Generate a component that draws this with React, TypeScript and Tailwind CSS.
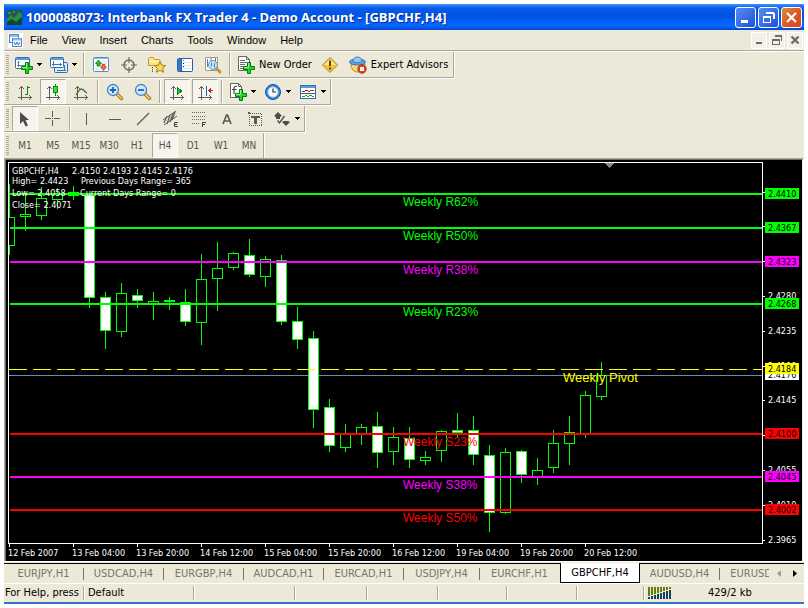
import type { ReactNode } from 'react';
import clsx from 'clsx';

type Candle = {
  high: number;
  low: number;
  top: number;
  bottom: number;
  kind: 'up' | 'down' | 'doji';
};

const c = (
  high: number,
  low: number,
  top: number,
  bottom: number,
  kind: Candle['kind'] = 'up'
): Candle => ({ high, low, top, bottom, kind });

const CANDLES: Candle[] = [
  c(24, 95, 57, 86),
  c(34, 71, 54, 57),
  c(27, 60, 38, 56),
  c(28, 49, 34, 40),
  c(26, 40, 32, 36, 'doji'),
  c(34, 148, 35, 138, 'down'),
  c(132, 189, 137, 171, 'down'),
  c(123, 177, 133, 172),
  c(129, 148, 135, 141, 'down'),
  c(132, 160, 141, 144),
  c(137, 150, 140, 142, 'doji'),
  c(129, 166, 142, 162, 'down'),
  c(94, 185, 119, 163),
  c(82, 151, 108, 119),
  c(92, 110, 93, 108),
  c(79, 117, 95, 115, 'down'),
  c(96, 127, 99, 117),
  c(95, 165, 100, 162, 'down'),
  c(147, 189, 161, 180, 'down'),
  c(171, 268, 178, 250, 'down'),
  c(239, 292, 247, 286, 'down'),
  c(264, 292, 274, 288),
  c(264, 285, 267, 275),
  c(252, 308, 266, 293, 'down'),
  c(267, 305, 277, 292),
  c(267, 308, 278, 300, 'down'),
  c(291, 305, 297, 301),
  c(270, 302, 271, 291),
  c(253, 277, 270, 273, 'down'),
  c(256, 305, 270, 295, 'down'),
  c(285, 372, 295, 353, 'down'),
  c(288, 354, 292, 353),
  c(290, 323, 291, 315, 'down'),
  c(298, 325, 310, 317),
  c(270, 313, 283, 308),
  c(256, 305, 272, 284),
  c(231, 278, 235, 274),
  c(202, 240, 215, 237),
];

const LEVELS = [
  { label: 'Weekly R62%', price: '2.4410', y: 34, color: '#00ff00' },
  { label: 'Weekly R50%', price: '2.4367', y: 68, color: '#00ff00' },
  { label: 'Weekly R38%', price: '2.4323', y: 102, color: '#ff00ff' },
  { label: 'Weekly R23%', price: '2.4268', y: 144, color: '#00ff00' },
  { label: 'Weekly S23%', price: '2.4100', y: 274, color: '#ff0000' },
  { label: 'Weekly S38%', price: '2.4045', y: 317, color: '#ff00ff' },
  { label: 'Weekly S50%', price: '2.4002', y: 350, color: '#ff0000' },
];

const PRICE_TICKS = [
  { y: 32 },
  { y: 66 },
  { y: 101 },
  { y: 136, price: '2.4280' },
  { y: 171, price: '2.4235' },
  { y: 206, price: '2.4190' },
  { y: 240, price: '2.4145' },
  { y: 275 },
  { y: 310, price: '2.4055' },
  { y: 345, price: '2.4010' },
  { y: 380, price: '2.3965' },
];

const TIMES = [
  '12 Feb 2007',
  '13 Feb 04:00',
  '13 Feb 20:00',
  '14 Feb 12:00',
  '15 Feb 04:00',
  '15 Feb 20:00',
  '16 Feb 12:00',
  '19 Feb 04:00',
  '19 Feb 20:00',
  '20 Feb 12:00',
];

const TABS = [
  'EURJPY,H1',
  'USDCAD,H4',
  'EURGBP,H4',
  'AUDCAD,H1',
  'EURCAD,H1',
  'USDJPY,H4',
  'EURCHF,H1',
  'GBPCHF,H4',
  'AUDUSD,H4',
  'EURUSD,H4',
];

const MENUS = ['File', 'View', 'Insert', 'Charts', 'Tools', 'Window', 'Help'];
const PERIODS = ['M1', 'M5', 'M15', 'M30', 'H1', 'H4', 'D1', 'W1', 'MN'];

/* ---------- icons ---------- */

function Icon({ children, crisp = false }: { children: ReactNode; crisp?: boolean }) {
  return (
    <svg
      width="18"
      height="18"
      viewBox="0 0 18 18"
      fill="none"
      shapeRendering={crisp ? 'crispEdges' : 'auto'}
      className="shrink-0"
      aria-hidden="true"
    >
      {children}
    </svg>
  );
}

const Plus = () => (
  <>
    <path d="M10.500 6.500h3v4h4v3h-4v4h-3v-4h-4v-3h4z" fill="#22d622" stroke="#067a10" />
    <path d="M11.500 7v4.500H7" stroke="#9af59a" />
  </>
);

const Axes = () => (
  <path
    d="M5 3h1v14H5zM2 14h14v1H2zM4 4h3v1H4zM3 5h1v1H3zM7 5h1v1H7zM14 13h1v3h-1zM13 12h1v1h-1zM13 16h1v1h-1z"
    fill="#5c5c58"
  />
);

const NewChartIcon = () => (
  <Icon>
    <rect x="0.500" y="1.500" width="14" height="11" rx="1" fill="#fff" stroke="#2f6fb4" />
    <path d="M1 3h13" stroke="#5b9ade" strokeWidth="2" />
    <path d="M3.500 5v6M2 9.500h9M2.500 6.500h2" stroke="#5a7ea8" />
    <Plus />
  </Icon>
);

const ProfilesIcon = () => (
  <Icon>
    <rect x="4.500" y="6.500" width="13" height="10" rx="1" fill="#d8e9fa" stroke="#2f6fb4" />
    <path d="M7 14.500h9M14.500 9v6" stroke="#4d7096" />
    <rect x="0.500" y="1.500" width="13" height="10" rx="1" fill="#fff" stroke="#2f6fb4" />
    <path d="M1 3h12" stroke="#5b9ade" strokeWidth="2" />
    <path d="M3.500 5v5M2 8.500h10M10.500 7v3" stroke="#4d7096" />
  </Icon>
);

const MarketWatchIcon = () => (
  <Icon>
    <rect x="1.500" y="1.500" width="15" height="14" rx="1" fill="#fff" stroke="#4b8fd0" />
    <path d="M2 2.500h14" stroke="#8db9e4" />
    <path d="M10 5.500h5M10 7.500h5M3 11.500h4M3 13.500h5" stroke="#d5dde6" />
    <path d="M6.500 4L9.500 7.500H8v2.500H5V7.500H3.500z" fill="#2dbd2d" stroke="#0c7d12" strokeWidth="0.800" />
    <path d="M11.500 14.500l3-3.500H13V8.500h-3V11H8.500z" fill="#f0703c" stroke="#c23a10" strokeWidth="0.800" />
  </Icon>
);

const DataWindowIcon = () => (
  <Icon>
    <circle cx="9" cy="9" r="5" stroke="#6b6b66" strokeWidth="1.500" />
    <path d="M9 1v6M9 11v6M1 9h6M11 9h6" stroke="#6b6b66" strokeWidth="1.200" />
  </Icon>
);

const STAR = 'M12 5.500l1.700 3.700 3.900.4-2.900 2.700.8 4-3.500-2-3.500 2 .8-4-2.900-2.700 3.900-.4z';

const FavoritesIcon = () => (
  <Icon>
    <path d="M0.500 9.500v-7l1-1h4l1 2h5l.5 1v5z" fill="#fbe58a" stroke="#c89a1c" />
    <path d="M1 5.500h10" stroke="#fff6c8" />
    <path d="M4.500 11v6" stroke="#444" strokeDasharray="1 1" />
    <path d={STAR} fill="#fbd75a" stroke="#a87c12" />
  </Icon>
);

const NavigatorIcon = () => (
  <Icon>
    <rect x="1.500" y="2.500" width="15" height="13" rx="1" fill="#fff" stroke="#1f5fae" />
    <path d="M2 3h3v12H2z" fill="#2f7bd2" />
    <path d="M5.500 3v12" stroke="#1f5fae" />
    <path d="M7 6.500h8M7 9.500h8M7 12.500h8" stroke="#dfe6ee" />
    <path d="M7 4.500h1" stroke="#e23b2a" />
    <path d="M7 7.500h1M7 10.500h1" stroke="#222" />
  </Icon>
);

const Lens = ({ sign }: { sign: string }) => (
  <>
    <path d="M11 11l4.500 4.500" stroke="#a87612" strokeWidth="3.500" strokeLinecap="round" />
    <path d="M11 11l4.500 4.500" stroke="#f6cf5c" strokeWidth="1.600" strokeLinecap="round" />
    <circle cx="7" cy="7" r="5.500" fill="#cfe6fb" stroke="#3b86cf" strokeWidth="1.300" />
    <path d={sign} stroke="#1d62b0" strokeWidth="1.800" />
  </>
);

const TesterIcon = () => (
  <Icon>
    <path d="M1.500 1.500h12v13h-12z" fill="#fff" stroke="#9a9a94" />
    <path d="M3.500 3v8M7 2v4M11.500 2v6" stroke="#7a7a74" />
    <path d="M12 12l4 4" stroke="#c8942a" strokeWidth="3" strokeLinecap="round" />
    <circle cx="9" cy="9" r="4.500" fill="#bfe0fa" fillOpacity="0.850" stroke="#5b93c8" />
    <path d="M7.500 6.500v4M10.500 7.500v4" stroke="#4a7aa8" />
  </Icon>
);

const OrderIcon = ({ letter = false }: { letter?: boolean }) => (
  <Icon>
    <path d="M1.500 0.500h8l3 3v11h-11z" fill="#fff" stroke="#66665e" />
    <path d="M9.500 0.500v3h3" stroke="#66665e" />
    {letter ? (
      <path d="M8 3.500c-2.500-.8-3 .5-3 2v5.500M3 6.500h4.500" stroke="#444" strokeWidth="1.200" />
    ) : (
      <path d="M3 4.500h5M3 6.500h7M3 8.500h5M3 10.500h3M3 12.500h3" stroke="#6c6c64" />
    )}
    <Plus />
  </Icon>
);

const WarningIcon = () => (
  <Icon>
    <path d="M9 1.500L16.500 9 9 16.500 1.500 9z" fill="#f0c63c" stroke="#b58a12" strokeLinejoin="round" />
    <path d="M9 3L15 9H3z" fill="#fbe88c" />
    <path d="M9 4.500v5.500M9 11.500v2" stroke="#5b4504" strokeWidth="2" />
  </Icon>
);

const ExpertIcon = () => (
  <Icon>
    <path d="M2 8c0 5 3 8 7 8s7-4 7-8z" fill="#f8d870" stroke="#b88a20" />
    <ellipse cx="8.500" cy="6" rx="8" ry="3" fill="#5ea3e0" stroke="#2e74b8" />
    <path d="M4 5.500C4 2.500 6 1 8.500 1S13 2.500 13 5.500c-2 1.500-7 1.500-9 0z" fill="#93c6f2" stroke="#3a80c2" />
    <circle cx="13" cy="13" r="4.200" fill="#e8401c" stroke="#a82408" strokeWidth="0.800" />
    <rect x="11" y="11" width="4" height="4" fill="#fff" />
  </Icon>
);

const BarChartIcon = () => (
  <Icon crisp>
    <Axes />
    <path d="M11 3h1v9h-1zM12 4h2v1h-2zM9 11h2v1H9z" fill="#0d8a14" />
  </Icon>
);

const CandleIcon = () => (
  <Icon crisp>
    <Axes />
    <path d="M11 1h1v12h-1z" fill="#0d8a14" />
    <path d="M9 3h5v7H9z" fill="#0d8a14" />
    <path d="M10 4h3v5h-3z" fill="#3be03b" />
  </Icon>
);

const LineChartIcon = () => (
  <Icon>
    <Axes />
    <path d="M4 12c2-3 3.500-6 5.500-6s3 3 5.500 4" stroke="#3f7a3f" strokeWidth="1.300" />
  </Icon>
);

const ZoomInIcon = () => (
  <Icon>
    <Lens sign="M4 7h6M7 4v6" />
  </Icon>
);

const ZoomOutIcon = () => (
  <Icon>
    <Lens sign="M4 7h6" />
  </Icon>
);

const AutoScrollIcon = () => (
  <Icon crisp>
    <Axes />
    <path d="M9.500 4.500L13.500 8l-4 3.500z" fill="#2ecb2e" stroke="#0d7a14" />
  </Icon>
);

const ChartShiftIcon = () => (
  <Icon crisp>
    <Axes />
    <path d="M10 3h1v10h-1z" fill="#2a64a8" />
    <path d="M12 7h5v1h-5zM13 6h1v3h-1zM14 5h1v5h-1z" fill="#b03018" />
  </Icon>
);

const ClockIcon = () => (
  <Icon>
    <circle cx="9" cy="9" r="7.500" fill="#2f86e0" stroke="#1553a0" />
    <circle cx="9" cy="9" r="5.200" fill="#f6fbff" stroke="#8fc0f0" />
    <path d="M9 5.500V9h3" stroke="#333" strokeWidth="1.200" />
  </Icon>
);

const TemplateIcon = () => (
  <Icon crisp>
    <rect x="1.500" y="2.500" width="15" height="13" fill="#fff" stroke="#2f6fb4" />
    <path d="M2 3h14v2H2z" fill="#5b9ade" />
    <path d="M2 10h14v1H2z" fill="#44607c" />
    <path d="M3 8.500h3M6 7.500h3M9 8.500h2M11 7.500h4" stroke="#a02818" />
    <path d="M3 13.500h3M6 12.500h2M8 13.500h2M10 12.500h3M13 13.500h2" stroke="#2f9a3a" />
  </Icon>
);

const CursorIcon = () => (
  <Icon>
    <path d="M4 2v12l3-3 2.500 5.500 2.500-1L9.500 10H13z" fill="#4c4c4c" />
  </Icon>
);

const CrosshairIcon = () => (
  <Icon crisp>
    <path d="M8 1h1v6H8zM8 10h1v6H8zM1 8h6v1H1zM10 8h6v1h-6zM8 8h1v1H8z" fill="#5a5a55" />
  </Icon>
);

const VLineIcon = () => (
  <Icon crisp>
    <path d="M8 3h1v12H8z" fill="#5a5a55" />
  </Icon>
);

const HLineIcon = () => (
  <Icon crisp>
    <path d="M3 9h12v1H3z" fill="#5a5a55" />
  </Icon>
);

const TrendIcon = () => (
  <Icon>
    <path d="M3 15L15 3" stroke="#5a5a55" strokeWidth="1.200" />
  </Icon>
);

const ChannelIcon = () => (
  <Icon>
    <path d="M1 10L14 1M2 15L15 6" stroke="#5a5a55" />
    <path d="M2 13l3-7M5 14l3-9M8 12l3-9M10 10l3-8" stroke="#5a5a55" strokeWidth="1.200" />
    <path d="M16 12.500h-3.500v4H16M12.500 14.500H15" stroke="#444" />
  </Icon>
);

const FiboIcon = () => (
  <Icon crisp>
    <path d="M2 2.500h14M2 6.500h14M2 9.500h14M2 13.500h8" stroke="#6b6b66" strokeDasharray="1 1" />
    <path d="M12 12h4v1h-3v1h2v1h-2v2h-1z" fill="#444" />
  </Icon>
);

const LetterIcon = () => (
  <Icon>
    <path d="M5 14L8.500 5h1L13 14M6.500 11h5" stroke="#5a5a55" strokeWidth="1.700" />
  </Icon>
);

const TextLabelIcon = () => (
  <Icon crisp>
    <rect x="3.500" y="3.500" width="12" height="12" stroke="#5a5a55" strokeDasharray="1 1" />
    <path d="M2 2h2v2H2zM5 6h9v2H5zM8 6h3v8H8z" fill="#5a5a55" />
  </Icon>
);

const ArrowsIcon = () => (
  <Icon>
    <path d="M5 2l4 4-2 1v2H3V7L1 6zM13 16l-4-4 2-1h4l2 1z" fill="#4c4c4c" />
    <path d="M4.500 10.500l2 2.500 5-7" stroke="#4c4c4c" strokeWidth="1.300" />
  </Icon>
);

/* ---------- toolbars ---------- */

function Toolbar({ label, children, last = false }: { label: string; children: ReactNode; last?: boolean }) {
  return (
    <div
      role="toolbar"
      aria-label={label}
      className={clsx(
        'flex w-fit items-stretch border-r border-[#aca899]',
        last ? 'h-[25px] shadow-[1px_0_0_#fff]' : 'mb-px h-[26px] border-b shadow-[1px_1px_0_#fff]'
      )}
    >
      <span className="my-[3px] mr-0.5 ml-0.5 w-[3px] bg-[repeating-linear-gradient(#aca899_0_1px,transparent_1px_2px)]" />
      {children}
    </div>
  );
}

const Separator = () => <span className="mx-[2px] my-px w-[2px] border-r border-l border-r-white border-l-[#aca899]" />;

function ToolButton({
  label,
  children,
  pressed = false,
}: {
  label: string;
  children: ReactNode;
  pressed?: boolean;
}) {
  return (
    <button
      type="button"
      aria-label={label}
      aria-pressed={pressed}
      className={clsx(
        'mx-px flex w-[26px] items-center justify-center border',
        pressed ? 'border-t-[#aca899] border-r-white border-b-white border-l-[#aca899] bg-[#f6f4ec]' : 'border-transparent'
      )}
    >
      {children}
    </button>
  );
}

function DropButton({ label, children }: { label: string; children: ReactNode }) {
  return (
    <button type="button" aria-label={label} aria-haspopup="menu" className="flex w-[35px] items-center gap-1 pl-1">
      {children}
      <svg width="5" height="3" viewBox="0 0 5 3" shapeRendering="crispEdges" aria-hidden="true">
        <path d="M0 0h5v1H0zM1 1h3v1H1zM2 2h1v1H2z" />
      </svg>
    </button>
  );
}

/* ---------- chart ---------- */

function CandleShape({ candle, index }: { candle: Candle; index: number }) {
  const x = 3 + index * 16;
  const { high, low, top, bottom, kind } = candle;
  const fill = kind === 'down' ? '#ffffff' : kind === 'doji' ? '#00ff00' : '#000000';
  return (
    <g>
      <rect x={x} y={high} width={1} height={low - high} fill="#00ff00" />
      <rect x={x - 5} y={top} width={11} height={bottom - top} fill="#00ff00" />
      <rect x={x - 4} y={top + 1} width={9} height={Math.max(bottom - top - 2, 0)} fill={fill} />
    </g>
  );
}

function PriceTag({ y, price, color }: { y: number; price: string; color: string }) {
  return (
    <g>
      <rect x={759} y={y} width={34} height={11} fill={color} />
      <text x={762} y={y + 9} fill="#000">
        {price}
      </text>
    </g>
  );
}

function Chart() {
  return (
    <svg
      viewBox="0 0 796 401"
      className="block w-full bg-black font-['DejaVu_Sans_Condensed','Noto_Sans',sans-serif] text-[9px]"
      shapeRendering="crispEdges"
      role="img"
      aria-label="GBPCHF H4 candlestick chart"
    >
      <clipPath id="plot">
        <rect x="3" y="3" width="753" height="380" />
      </clipPath>
      <rect x="3" y="215" width="754" height="1" fill="#778899" />
      <g clipPath="url(#plot)">
        {CANDLES.map((candle, i) => (
          <CandleShape key={i} candle={candle} index={i} />
        ))}
      </g>
      <path d="M3 209.500h753" stroke="#ffff00" strokeDasharray="18 6" />

      {LEVELS.map((level) => (
        <rect key={level.label} x={4} y={level.y - 1} width={752} height={2} fill={level.color} />
      ))}

      {/* plot frame and shift marker */}
      <path d="M756.500 383V2.500H2.500v381h754" fill="none" stroke="#fff" />
      <path d="M599 3h9l-4.500 5z" fill="#778899" />

      <g className="font-['Liberation_Sans',Arial,sans-serif] text-[12px]">
        {LEVELS.map((level) => (
          <text key={level.label} x={397} y={level.y + 12} fill={level.color}>
            {level.label}
          </text>
        ))}
        <text x={557} y={222} fill="#ffff00" className="text-[13px]">
          Weekly Pivot
        </text>
      </g>

      <g fill="#fff">
        <text x={6} y={14}>GBPCHF,H4</text>
        <text x={66} y={14}>2.4150 2.4193 2.4145 2.4176</text>
        <text x={6} y={24}>High= 2.4423</text>
        <text x={75} y={24}>Previous Days Range= 365</text>
        <text x={6} y={36}>Low= 2.4058</text>
        <text x={74} y={36}>Current Days Range= 0</text>
        <text x={6} y={48}>Close= 2.4071</text>
      </g>

      <g fill="#fff">
        {PRICE_TICKS.map((tick) => (
          <g key={tick.y}>
            <rect x={757} y={tick.y} width={2} height={1} />
            {tick.price && (
              <text x={762} y={tick.y + 3}>
                {tick.price}
              </text>
            )}
          </g>
        ))}
        {TIMES.map((time, i) => (
          <g key={time}>
            <rect x={3 + i * 64} y={384} width={1} height={3} />
            <text x={2 + i * 64} y={396}>
              {time}
            </text>
          </g>
        ))}
      </g>

      {LEVELS.map((level) => (
        <PriceTag key={level.price} y={level.y - 6} price={level.price} color={level.color} />
      ))}
      <PriceTag y={209} price="2.4176" color="#ffffff" />
      <PriceTag y={203} price="2.4184" color="#ffff00" />
    </svg>
  );
}

/* ---------- window ---------- */

const captionBtn =
  'flex size-[21px] items-center justify-center rounded-[3px] border border-white bg-linear-to-br from-[#5a8cf0] to-[#1c50d8]';
const mdiBtn = 'flex h-[17px] w-4 items-center justify-center border border-white bg-[#f3f2ea]';

function WindowGlyph({ kind }: { kind: 'min' | 'restore' | 'close' }) {
  return (
    <svg width="13" height="13" viewBox="0 0 13 13" fill="none" stroke="#fff" aria-hidden="true">
      {kind === 'min' && <path d="M2 10.500h7" strokeWidth="3" />}
      {kind === 'restore' && (
        <>
          <path d="M4 2h8M11.500 2v6" strokeWidth="2" shapeRendering="crispEdges" />
          <path d="M1 6h8" strokeWidth="2" shapeRendering="crispEdges" />
          <path d="M1.500 6v5.500h7V6" shapeRendering="crispEdges" />
        </>
      )}
      {kind === 'close' && <path d="M2 2l9 9M11 2l-9 9" strokeWidth="2.200" />}
    </svg>
  );
}

function MdiGlyph({ kind }: { kind: 'min' | 'restore' | 'close' }) {
  return (
    <svg width="10" height="10" viewBox="0 0 10 10" fill="none" stroke="#6e6c60" shapeRendering="crispEdges" aria-hidden="true">
      {kind === 'min' && <path d="M2 8h6" strokeWidth="2" />}
      {kind === 'restore' && (
        <>
          <path d="M3 1h7M9.500 1v5" strokeWidth="2" />
          <path d="M0 5h8" strokeWidth="2" />
          <path d="M0.500 4v5.500h7V4" />
        </>
      )}
      {kind === 'close' && <path d="M1.500 1.500l7 7M8.500 1.500l-7 7" strokeWidth="2.400" shapeRendering="auto" />}
    </svg>
  );
}

function TitleBar() {
  return (
    <header className="flex h-[26px] items-center bg-[linear-gradient(#3d95ff_0,#0a5be8_4px,#0053e1_12px,#0866ff_20px,#0560f5_23px,#0145c8)] pr-0.5 pl-[3px]">
      <svg width="15" height="15" viewBox="0 0 15 15" aria-hidden="true">
        <rect width="15" height="15" fill="#1d5a4c" />
        <path d="M0 9l4-4 3 3 5-6 3 2v11H0z" fill="#2e8a4a" />
        <path d="M0 12l5-3 4 3 6-5v8H0z" fill="#12452f" />
        <path d="M1 3h3M6 2h2" stroke="#7fb8a8" />
      </svg>
      <h1 className="ml-1 min-w-0 flex-1 truncate font-['Open_Sans','Noto_Sans',sans-serif] text-[13px] leading-5 font-bold text-white [text-shadow:1px_1px_0_#0a2a8c]">
        1000088073: Interbank FX Trader 4 - Demo Account - [GBPCHF,H4]
      </h1>
      <div className="flex gap-0.5">
        <button type="button" aria-label="Minimize" className={captionBtn}>
          <WindowGlyph kind="min" />
        </button>
        <button type="button" aria-label="Restore" className={captionBtn}>
          <WindowGlyph kind="restore" />
        </button>
        <button
          type="button"
          aria-label="Close"
          className="flex size-[21px] items-center justify-center rounded-[3px] border border-white bg-linear-to-br from-[#d49038] via-[#e0582a] to-[#d04818]"
        >
          <WindowGlyph kind="close" />
        </button>
      </div>
    </header>
  );
}

function MenuBar() {
  return (
    <nav className="mb-px flex h-[21px] items-center border-b border-[#aca899] pr-px pl-1 shadow-[0_1px_0_#fff]">
      <svg width="15" height="15" viewBox="0 0 15 15" fill="none" aria-hidden="true">
        <rect width="15" height="15" fill="#fff" />
        <rect x="1.500" y="1.500" width="9" height="8" stroke="#4a8ad4" />
        <path d="M2 3h8" stroke="#8fbcf0" strokeWidth="2" />
        <rect x="4.500" y="5.500" width="9" height="8" fill="#fff" stroke="#4a8ad4" />
        <path d="M5 6.500h8" stroke="#8fbcf0" strokeWidth="2" />
        <path d="M6 9l1.500 3L9 9l1.500 3L12 9" stroke="#3a6aa8" />
      </svg>
      <div className="flex flex-1 font-['Liberation_Sans',Arial,sans-serif]">
        {MENUS.map((menu) => (
          <button key={menu} type="button" className="px-[7px]">
            {menu}
          </button>
        ))}
      </div>
      <div className="flex gap-0.5">
        <button type="button" aria-label="Minimize chart" className={mdiBtn}>
          <MdiGlyph kind="min" />
        </button>
        <button type="button" aria-label="Restore chart" className={mdiBtn}>
          <MdiGlyph kind="restore" />
        </button>
        <button type="button" aria-label="Close chart" className={mdiBtn}>
          <MdiGlyph kind="close" />
        </button>
      </div>
    </nav>
  );
}

function Toolbars() {
  return (
    <div>
      <Toolbar label="Standard">
        <DropButton label="New chart"><NewChartIcon /></DropButton>
        <DropButton label="Profiles"><ProfilesIcon /></DropButton>
        <Separator />
        <ToolButton label="Market Watch"><MarketWatchIcon /></ToolButton>
        <ToolButton label="Data Window"><DataWindowIcon /></ToolButton>
        <ToolButton label="Favorites"><FavoritesIcon /></ToolButton>
        <ToolButton label="Navigator"><NavigatorIcon /></ToolButton>
        <ToolButton label="Strategy Tester"><TesterIcon /></ToolButton>
        <Separator />
        <button type="button" className="flex items-center gap-1 pr-1 pl-1">
          <OrderIcon />
          New Order
        </button>
        <ToolButton label="MetaEditor"><WarningIcon /></ToolButton>
        <button type="button" className="flex items-center gap-1 pr-[5px] pl-[5px]">
          <ExpertIcon />
          Expert Advisors
        </button>
      </Toolbar>

      <Toolbar label="Charts">
        <ToolButton label="Bar chart"><BarChartIcon /></ToolButton>
        <ToolButton label="Candlesticks" pressed><CandleIcon /></ToolButton>
        <ToolButton label="Line chart"><LineChartIcon /></ToolButton>
        <Separator />
        <ToolButton label="Zoom in"><ZoomInIcon /></ToolButton>
        <ToolButton label="Zoom out"><ZoomOutIcon /></ToolButton>
        <Separator />
        <ToolButton label="Auto scroll" pressed><AutoScrollIcon /></ToolButton>
        <ToolButton label="Chart shift" pressed><ChartShiftIcon /></ToolButton>
        <Separator />
        <DropButton label="Indicators"><OrderIcon letter /></DropButton>
        <DropButton label="Periods"><ClockIcon /></DropButton>
        <DropButton label="Templates"><TemplateIcon /></DropButton>
      </Toolbar>

      <Toolbar label="Line studies">
        <ToolButton label="Cursor" pressed><CursorIcon /></ToolButton>
        <ToolButton label="Crosshair"><CrosshairIcon /></ToolButton>
        <Separator />
        <ToolButton label="Vertical line"><VLineIcon /></ToolButton>
        <ToolButton label="Horizontal line"><HLineIcon /></ToolButton>
        <ToolButton label="Trendline"><TrendIcon /></ToolButton>
        <ToolButton label="Equidistant channel"><ChannelIcon /></ToolButton>
        <ToolButton label="Fibonacci retracement"><FiboIcon /></ToolButton>
        <ToolButton label="Text"><LetterIcon /></ToolButton>
        <ToolButton label="Text label"><TextLabelIcon /></ToolButton>
        <DropButton label="Arrows"><ArrowsIcon /></DropButton>
      </Toolbar>

      <Toolbar label="Periodicity" last>
        {PERIODS.map((period) => (
          <ToolButton key={period} label={period} pressed={period === 'H4'}>
            <span className="text-[10px] text-[#55544c]">{period}</span>
          </ToolButton>
        ))}
      </Toolbar>
    </div>
  );
}

function ChartTabs() {
  return (
    <div className="mt-px flex h-[21px] border-b border-white">
      <div role="tablist" className="flex min-w-0 flex-1 overflow-hidden">
        {TABS.map((tab, i) => {
          const active = tab === 'GBPCHF,H4';
          const divider = i < TABS.length - 1 && TABS[i + 1] !== 'GBPCHF,H4';
          return (
            <button
              key={tab}
              type="button"
              role="tab"
              aria-selected={active}
              className={clsx(
                'flex h-5 shrink-0 items-center justify-center',
                tab === 'USDJPY,H4' ? 'w-[76px]' : 'w-20',
                active ? 'border-x border-b border-black bg-white text-black' : 'border-t border-black text-[#77756a]'
              )}
            >
              {active ? (
                tab
              ) : (
                <span
                  className={clsx(
                    'flex h-3 w-full items-center justify-center border-r',
                    divider ? 'border-[#77756a]' : 'border-transparent'
                  )}
                >
                  {tab}
                </span>
              )}
            </button>
          );
        })}
      </div>
      <div className="flex items-center gap-3 border-t border-black pr-[7px] pl-2">
        <button type="button" aria-label="Scroll tabs left">
          <svg width="4" height="7" viewBox="0 0 4 7" aria-hidden="true">
            <path d="M4 0v7L0 3.500z" fill="#a09e92" />
          </svg>
        </button>
        <button type="button" aria-label="Scroll tabs right">
          <svg width="4" height="7" viewBox="0 0 4 7" aria-hidden="true">
            <path d="M0 0v7l4-3.500z" fill="#000" />
          </svg>
        </button>
      </div>
    </div>
  );
}

const statusCell = 'my-[2px] shrink-0 border-l border-[#aca899] shadow-[inset_1px_0_0_#fff]';

function StatusBar() {
  return (
    <footer className="flex h-5 items-stretch border-b-2 border-[#3872d0]">
      <div className="flex w-[79px] shrink-0 items-center overflow-hidden pl-px whitespace-nowrap">For Help, press</div>
      <div className={clsx(statusCell, 'flex w-[110px] items-center pl-1')}>Default</div>
      <div className={clsx(statusCell, 'w-[101px]')} />
      <div className={clsx(statusCell, 'w-[72px]')} />
      <div className={clsx(statusCell, 'w-[71px]')} />
      <div className={clsx(statusCell, 'w-[69px]')} />
      <div className={clsx(statusCell, 'w-[70px]')} />
      <div className={clsx(statusCell, 'w-[67px]')} />
      <div className={clsx(statusCell, 'flex flex-1 items-center pl-1')}>
        <svg width="24" height="12" viewBox="0 0 24 12" shapeRendering="crispEdges" aria-hidden="true">
          {[10, 9, 8, 7, 6, 5, 4, 3].map((h, i) => (
            <g key={h}>
              <rect x={i * 3} y={0} width={2} height={h - 1} fill="#6b7a08" />
              <rect x={i * 3} y={h} width={2} height={12 - h} fill="#0c4560" />
            </g>
          ))}
        </svg>
        <span className="ml-9">429/2 kb</span>
      </div>
    </footer>
  );
}

export default function App() {
  return (
    <div className="min-h-screen bg-white p-1 font-['DejaVu_Sans_Condensed','Noto_Sans',sans-serif] text-[11px] leading-4 text-black">
      <div className="bg-[#ece9d8]">
        <TitleBar />
        <MenuBar />
        <Toolbars />
        <main className="border border-t-[#aca899] border-r-white border-b-white border-l-[#aca899]">
          <div className="border-t border-r border-l border-t-[#716f64] border-r-[#f1efe2] border-l-[#716f64]">
            <Chart />
          </div>
        </main>
        <ChartTabs />
        <StatusBar />
      </div>
    </div>
  );
}
